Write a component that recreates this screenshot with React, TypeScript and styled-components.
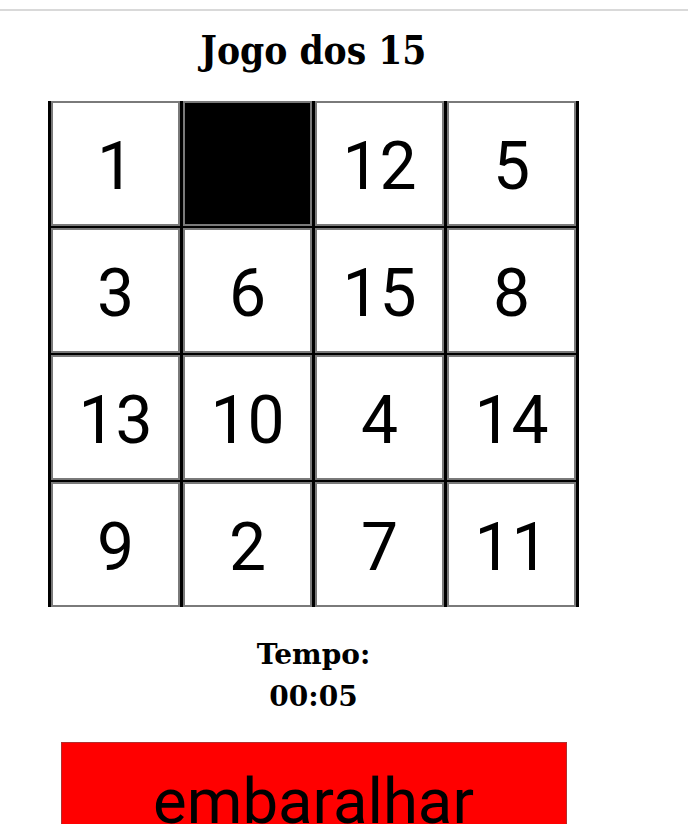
import React from "react";
import styled, { createGlobalStyle } from "styled-components";

const Global = createGlobalStyle`
  html, body { margin: 0; padding: 0; background: #ffffff; }
  body { overflow: hidden; }
`;

const TopRule = styled.div`
  margin-top: 9px;
  height: 2px;
  background: #d9d9d9;
`;

const Page = styled.main`
  width: 627px;
  display: flex;
  flex-direction: column;
  align-items: center;
`;

const Title = styled.h1`
  margin: 18px 0 0;
  font-family: "DejaVu Serif Condensed", "DejaVu Serif", serif;
  font-stretch: condensed;
  font-weight: 700;
  font-size: 38.5px;
  line-height: 44px;
  color: #000;
`;

const Board = styled.div`
  margin-top: 28px;
  display: grid;
  grid-template-columns: repeat(4, 129px);
  grid-auto-rows: 125px;
  column-gap: 3px;
  row-gap: 2px;
  padding: 0 3px;
  background: #000;
`;

const Tile = styled.div<{ $empty?: boolean }>`
  box-sizing: border-box;
  border: 2px solid #7a7a7a;
  background: ${(p) => (p.$empty ? "#000" : "#fff")};
  display: flex;
  align-items: center;
  justify-content: center;
  padding-top: 6px;
  font-family: Roboto, "Noto Sans", sans-serif;
  font-size: 66px;
  color: #000;
`;

const Timer = styled.div`
  margin-top: 27px;
  font-family: "DejaVu Serif", serif;
  font-weight: 700;
  font-size: 28px;
  line-height: 42px;
  text-align: center;
  color: #000;
`;

const ShuffleButton = styled.button`
  margin-top: 24px;
  width: 506px;
  height: 120px;
  box-sizing: border-box;
  border: 1px solid #b03030;
  background: #ff0000;
  color: #000;
  font-family: Roboto, "Noto Sans", sans-serif;
  font-size: 63.5px;
  display: flex;
  justify-content: center;
  align-items: flex-start;
  padding: 21px 0 0;
`;

const tiles = [1, 0, 12, 5, 3, 6, 15, 8, 13, 10, 4, 14, 9, 2, 7, 11];

export default function App() {
  return (
    <>
      <Global />
      <TopRule />
      <Page>
        <Title>Jogo dos 15</Title>
        <Board>
          {tiles.map((n, i) => (
            <Tile key={i} $empty={n === 0}>
              {n === 0 ? "" : n}
            </Tile>
          ))}
        </Board>
        <Timer>
          Tempo:
          <br />
          00:05
        </Timer>
        <ShuffleButton>embaralhar</ShuffleButton>
      </Page>
    </>
  );
}
